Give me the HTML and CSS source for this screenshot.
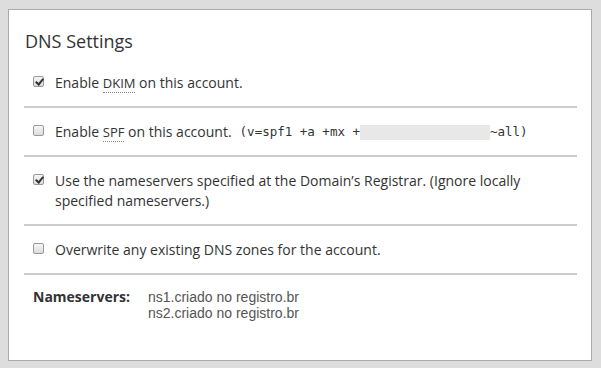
FILE: index.html
```html
<!DOCTYPE html>
<html>
<head>
<meta charset="utf-8">
<link rel="stylesheet" href="styles.css">
</head>
<body>
<div class="panel">
  <h2 class="title">DNS Settings</h2>
  <div class="row">
    <label class="opt"><input type="checkbox" class="cb" checked><span>Enable <abbr class="ab">DKIM</abbr> on this account.</span></label>
  </div>
  <div class="row">
    <label class="opt"><input type="checkbox" class="cb"><span>Enable <abbr class="ab">SPF</abbr> on this account.</span></label>
    <span class="spf">(v=spf1 +a +mx +<span class="ip"></span>~all)</span>
  </div>
  <div class="row wrap">
    <label class="opt"><input type="checkbox" class="cb" checked><span>Use the nameservers specified at the Domain’s Registrar. (Ignore locally specified nameservers.)</span></label>
  </div>
  <div class="row">
    <label class="opt"><input type="checkbox" class="cb"><span>Overwrite any existing DNS zones for the account.</span></label>
  </div>
  <div class="ns">
    <div class="ns-label">Nameservers:</div>
    <div class="ns-list">
      <div>ns1.criado no registro.br</div>
      <div>ns2.criado no registro.br</div>
    </div>
  </div>
</div>
</body>
</html>
```
FILE: styles.css
```css
html, body { margin: 0; padding: 0; }
body {
  background: #dddddd;
  padding: 9px 9px 7px 8px;
  font-family: "Open Sans", sans-serif;
  color: #333;
}
.panel {
  background: #fff;
  border: 1px solid #aaaaaa;
  height: 350px;
  box-sizing: content-box;
  padding: 0 14px 0 15px;
}
.title {
  margin: 0;
  padding: 19px 0 6px 1px;
  font-weight: normal;
  font-size: 18px;
  line-height: 24px;
  color: #333;
}
.row {
  border-bottom: 2px solid #cccccc;
  padding: 14px 0 13px 9px;
  font-size: 14px;
  line-height: 20px;
  display: flex;
  align-items: flex-start;
}
.opt { display: flex; align-items: flex-start; }
.cb {
  -webkit-appearance: none;
  appearance: none;
  flex: none;
  width: 11px;
  height: 11px;
  margin: 3px 11px 0 0;
  border: 1px solid #999;
  border-radius: 2px;
  background: linear-gradient(#f6f6f6, #dcdcdc);
  position: relative;
}
.cb:checked::after {
  content: "";
  position: absolute;
  left: 3px;
  top: 0px;
  width: 3px;
  height: 6px;
  border: solid #333;
  border-width: 0 2px 2px 0;
  transform: rotate(40deg);
}
.wrap .opt { display: block; }
.wrap .opt .cb { float: left; margin-bottom: 8px; }
.ab {
  text-decoration: none;
  border-bottom: 1px dotted #888;
  font-size: 13px;
}
.spf {
  margin-left: 8px;
  font-family: "DejaVu Sans Mono", monospace;
  font-size: 12.5px;
  color: #333;
  display: flex;
  align-items: center;
  height: 20px;
}
.ip {
  display: inline-block;
  width: 130px;
  height: 15px;
  background: #e8e8e8;
}
.ns {
  display: flex;
  padding: 14px 0 0 9px;
  line-height: 16px;
}
.ns-label {
  font-weight: bold;
  font-size: 14px;
  width: 115px;
  color: #333;
}
.ns-list {
  font-family: "Liberation Sans", Arial, sans-serif;
  font-size: 14px;
  color: #555;
}
```
